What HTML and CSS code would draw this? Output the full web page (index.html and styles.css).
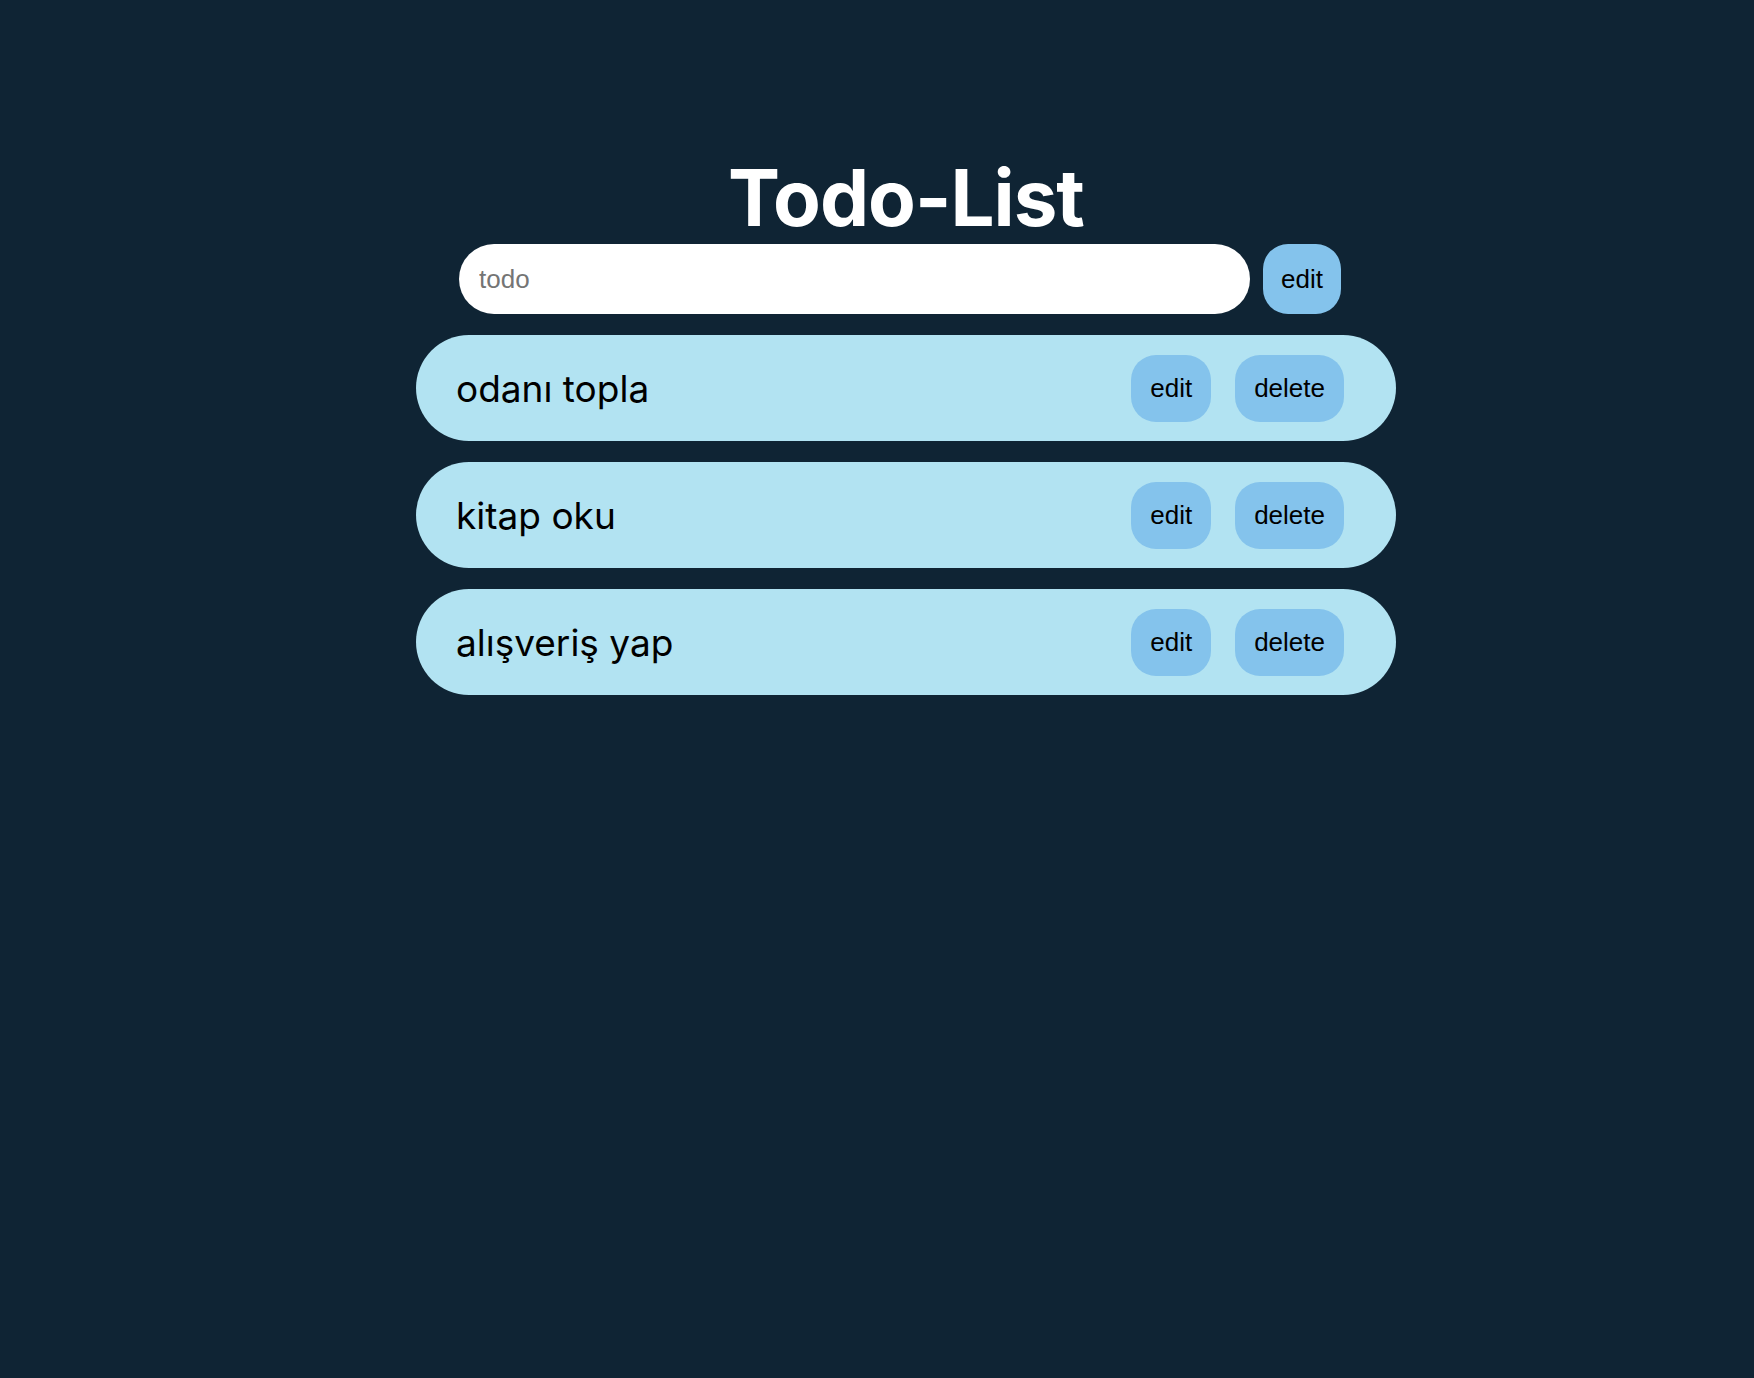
FILE: index.html
```html
<!DOCTYPE html>
<html lang="tr">
<head>
<meta charset="utf-8">
<title>Todo-List</title>
<link rel="stylesheet" href="styles.css">
</head>
<body>
<div class="app">
  <h1 class="title">Todo-List</h1>
  <form class="add-row">
    <input class="add-input" type="text" placeholder="todo">
    <button class="btn btn-add" type="button">edit</button>
  </form>
  <ul class="todo-list">
    <li class="todo-item">
      <span class="todo-text">odanı topla</span>
      <div class="todo-actions">
        <button class="btn" type="button">edit</button>
        <button class="btn" type="button">delete</button>
      </div>
    </li>
    <li class="todo-item">
      <span class="todo-text">kitap oku</span>
      <div class="todo-actions">
        <button class="btn" type="button">edit</button>
        <button class="btn" type="button">delete</button>
      </div>
    </li>
    <li class="todo-item">
      <span class="todo-text">alışveriş yap</span>
      <div class="todo-actions">
        <button class="btn" type="button">edit</button>
        <button class="btn" type="button">delete</button>
      </div>
    </li>
  </ul>
</div>
</body>
</html>
```
FILE: styles.css
```css
* { box-sizing: border-box; }

html, body {
  margin: 0;
  padding: 0;
  background: #0f2434;
  min-height: 100%;
}

body {
  font-family: Inter, "Noto Sans", sans-serif;
}

.app {
  width: 980px;
  margin-left: 416px;
  padding-top: 159px;
}

.title {
  margin: 0 0 7px 0;
  text-align: center;
  color: #ffffff;
  font-family: Inter, sans-serif;
  font-weight: 700;
  font-size: 78px;
  line-height: 78px;
  letter-spacing: -1px;
}

.add-row {
  display: flex;
  gap: 13px;
  margin: 0 0 21px 43px;
  width: 882px;
}

.add-input {
  flex: 1;
  height: 70px;
  border: none;
  outline: none;
  border-radius: 35px;
  background: #ffffff;
  padding: 0 20px;
  font-family: "Liberation Sans", Arial, sans-serif;
  font-size: 26px;
  color: #222;
}

.add-input::placeholder {
  color: #757575;
}

.btn {
  border: none;
  background: #84c3ec;
  color: #000;
  font-family: "Liberation Sans", Arial, sans-serif;
  font-size: 26px;
  height: 67px;
  padding: 0 19px;
  border-radius: 25px;
  cursor: pointer;
}

.btn-add {
  height: 70px;
  width: 78px;
  padding: 0;
}

.todo-list {
  list-style: none;
  margin: 0;
  padding: 0;
  display: flex;
  flex-direction: column;
  gap: 21px;
}

.todo-item {
  display: flex;
  align-items: center;
  justify-content: space-between;
  height: 106px;
  background: #b2e3f2;
  border-radius: 53px;
  padding: 0 52px 0 40px;
}

.todo-text {
  font-size: 37px;
  color: #000;
}

.todo-actions {
  display: flex;
  gap: 24px;
}
```
